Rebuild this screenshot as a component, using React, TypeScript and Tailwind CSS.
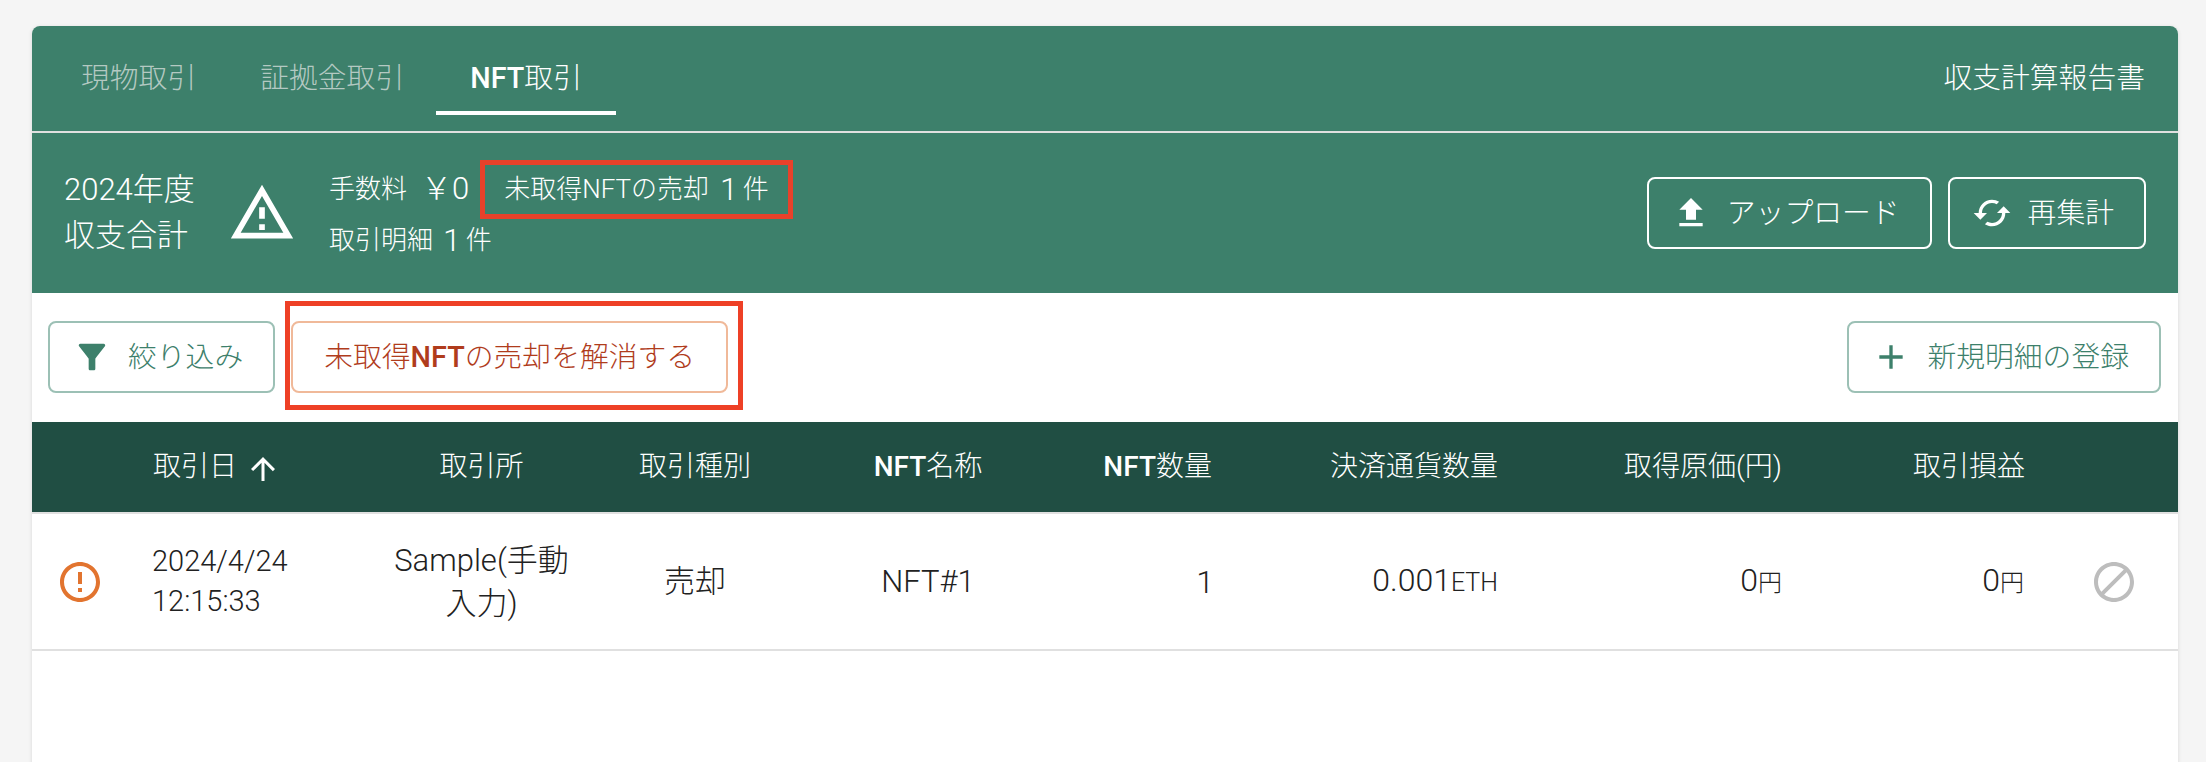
import React from "react";

const Ico = ({ d, cls }: { d: string; cls: string }) => (
  <svg viewBox="0 0 24 24" fill="currentColor" className={cls} aria-hidden="true">
    <path d={d} />
  </svg>
);

const P = {
  warn: "M12 5.99 19.53 19H4.47L12 5.99M12 2 1 21h22L12 2zm1 14h-2v2h2v-2zm0-6h-2v4h2v-4z",
  upload: "M5 20h14v-2H5v2zm0-10h4v6h6v-6h4l-7-7-7 7z",
  cached:
    "m19 8-4 4h3c0 3.31-2.69 6-6 6-1.01 0-1.97-.25-2.8-.7l-1.46 1.46C8.97 19.54 10.43 20 12 20c4.42 0 8-3.58 8-8h3l-4-4zM6 12c0-3.31 2.69-6 6-6 1.01 0 1.97.25 2.8.7l1.46-1.46C15.03 4.46 13.57 4 12 4c-4.42 0-8 3.58-8 8H1l4 4 4-4H6z",
  filter:
    "M4.25 5.61C6.27 8.2 10 13 10 13v6c0 .55.45 1 1 1h2c.55 0 1-.45 1-1v-6s3.72-4.8 5.74-7.39c.51-.66.04-1.61-.79-1.61H5.04c-.83 0-1.3.95-.79 1.61z",
  add: "M19 13h-6v6h-2v-6H5v-2h6V5h2v6h6v2z",
  up: "M4 12l1.41 1.41L11 7.83V20h2V7.83l5.58 5.59L20 12l-8-8-8 8z",
  err: "M11 15h2v2h-2zm0-8h2v6h-2zm.99-5C6.47 2 2 6.48 2 12s4.47 10 9.99 10C17.52 22 22 17.52 22 12S17.52 2 11.99 2zM12 20c-4.42 0-8-3.58-8-8s3.58-8 8-8 8 3.58 8 8-3.58 8-8 8z",
  block:
    "M12 2C6.48 2 2 6.48 2 12s4.48 10 10 10 10-4.48 10-10S17.52 2 12 2zM4 12c0-4.42 3.58-8 8-8 1.85 0 3.55.63 4.9 1.69L5.69 16.9C4.63 15.55 4 13.85 4 12zm8 8c-1.85 0-3.55-.63-4.9-1.69L18.31 7.1C19.37 8.45 20 10.15 20 12c0 4.42-3.58 8-8 8z",
};

const grid = "grid grid-cols-[89px_234px_253px_174px_292px_170px_286px_284px_242px_122px]";

export default function App() {
  return (
    <div className="h-[762px] overflow-hidden bg-[#f5f5f5] pl-[32px] pr-[28px] pt-[26px] font-[Roboto,'Noto_Sans_CJK_JP',sans-serif] text-[28px] font-light leading-[40px]">
      <div className="h-[760px] rounded-t-[8px] bg-white shadow-[0_1px_4px_rgba(0,0,0,0.12)]">
        {/* tabs */}
        <div className="flex h-[105px] items-start justify-between rounded-t-[8px] bg-[#3d806b] pl-[16px] pr-[33px] pt-[13px] text-[28.8px]">
          <div className="flex">
            <div className="flex h-[76px] items-center border-b-4 border-transparent pl-[33px] pr-[32px] pt-[6px] text-[#b4c9c2]">現物取引</div>
            <div className="flex h-[76px] items-center border-b-4 border-transparent pl-[32px] pr-[32px] pt-[6px] text-[#b4c9c2]">証拠金取引</div>
            <div className="flex h-[76px] items-center border-b-4 border-white px-[34px] pt-[6px] text-white">
              <span className="font-medium">NFT</span>取引
            </div>
          </div>
          <div className="flex h-[76px] items-center pb-[4px] pt-[6px] text-white">収支計算報告書</div>
        </div>
        <div className="h-[2px] bg-[#e0e0e0]" />

        {/* summary */}
        <div className="flex h-[160px] items-center justify-between bg-[#3d806b] pl-[32px] pr-[32px] text-white">
          <div className="flex items-center">
            <div className="w-[131px] text-[31px] leading-[46px]">
              <div>2024年度</div>
              <div>収支合計</div>
            </div>
            <Ico d={P.warn} cls="ml-[33px] h-[68px] w-[68px]" />
            <div className="ml-[33px] pb-[6px] text-[26px]">
              <div className="flex h-[59px] items-center">
                <span>手数料</span>
                <span className="ml-[14px] text-[31px]">{"\uFFE5"}0</span>
                <div className="ml-[11px] flex h-[59px] items-center border-[5px] border-[#e8412a] pl-[19px] pr-[19px]">
                  <span>未取得NFTの売却</span>
                  <span className="ml-[11px] text-[32px]">1</span>
                  <span className="ml-[5px]">件</span>
                </div>
              </div>
              <div className="flex h-[42px] items-center">
                <span>取引明細</span>
                <span className="ml-[10px] text-[32px]">1</span>
                <span className="ml-[5px]">件</span>
              </div>
            </div>
          </div>
          <div className="flex gap-[16px] text-[28.8px]">
            <div className="flex h-[72px] items-center gap-[16px] rounded-[8px] border-2 border-white pl-[22px] pr-[30px]">
              <Ico d={P.upload} cls="h-[40px] w-[40px]" />
              <span>アップロード</span>
            </div>
            <div className="flex h-[72px] items-center gap-[16px] rounded-[8px] border-2 border-white pl-[22px] pr-[30px]">
              <Ico d={P.cached} cls="h-[40px] w-[40px]" />
              <span>再集計</span>
            </div>
          </div>
        </div>

        {/* toolbar */}
        <div className="relative flex h-[129px] items-start justify-between pl-[16px] pr-[17px] pt-[28px] text-[28.8px]">
          <div className="flex gap-[16px]">
            <div className="flex h-[72px] items-center gap-[16px] rounded-[8px] border-2 border-[#9cc0b5] pl-[22px] pr-[30px] text-[#3d806b]">
              <Ico d={P.filter} cls="h-[40px] w-[40px]" />
              <span>絞り込み</span>
            </div>
            <div className="flex h-[72px] items-center rounded-[8px] border-2 border-[#f0b999] px-[31px] text-[#b03c1c]">
              未取得<span className="font-medium">NFT</span>の売却を解消する
            </div>
          </div>
          <div className="flex h-[72px] items-center gap-[16px] rounded-[8px] border-2 border-[#9cc0b5] pl-[22px] pr-[30px] text-[#3d806b]">
            <Ico d={P.add} cls="h-[40px] w-[40px]" />
            <span>新規明細の登録</span>
          </div>
          <div className="absolute left-[253px] top-[8px] h-[109px] w-[458px] border-[5px] border-[#ee4026]" />
        </div>

        {/* table head */}
        <div className={`${grid} h-[90px] items-center bg-[#204e43] text-white`}>
          <div />
          <div className="flex items-center pl-[32px]">
            <span>取引日</span>
            <Ico d={P.up} cls="ml-[8px] mt-[4px] h-[36px] w-[36px]" />
          </div>
          <div className="text-center">取引所</div>
          <div className="text-center">取引種別</div>
          <div className="text-center"><span className="font-medium">NFT</span>名称</div>
          <div className="pr-[32px] text-right"><span className="font-medium">NFT</span>数量</div>
          <div className="pr-[32px] text-right">決済通貨数量</div>
          <div className="pr-[32px] text-right">取得原価(円)</div>
          <div className="pr-[31px] text-right">取引損益</div>
          <div />
        </div>
        <div className="h-[2px] bg-[#e0e0e0]" />

        {/* row */}
        <div className={`${grid} h-[135px] items-center text-[#212121]`}>
          <div className="flex justify-center pl-[7px]">
            <Ico d={P.err} cls="h-[48px] w-[48px] text-[#e2742f]" />
          </div>
          <div className="pb-[2px] pl-[31px] text-[29px]">
            <div>2024/4/24</div>
            <div>12:15:33</div>
          </div>
          <div className="text-center text-[31px] leading-[43px]">
            Sample(手動
            <br />
            入力)
          </div>
          <div className="text-center text-[31px]">売却</div>
          <div className="text-center text-[31px]">NFT#1</div>
          <div className="pr-[30px] text-right text-[32px]">1</div>
          <div className="pr-[32px] text-right text-[32px]">0.001<span className="text-[25px]">ETH</span></div>
          <div className="pr-[32px] text-right text-[32px]">0<span className="text-[24px]">円</span></div>
          <div className="pr-[32px] text-right text-[32px]">0<span className="text-[24px]">円</span></div>
          <div className="flex justify-center pr-[6px]">
            <Ico d={P.block} cls="h-[48px] w-[48px] text-[#bdbdbd]" />
          </div>
        </div>
        <div className="h-[2px] bg-[#e0e0e0]" />
      </div>
    </div>
  );
}
